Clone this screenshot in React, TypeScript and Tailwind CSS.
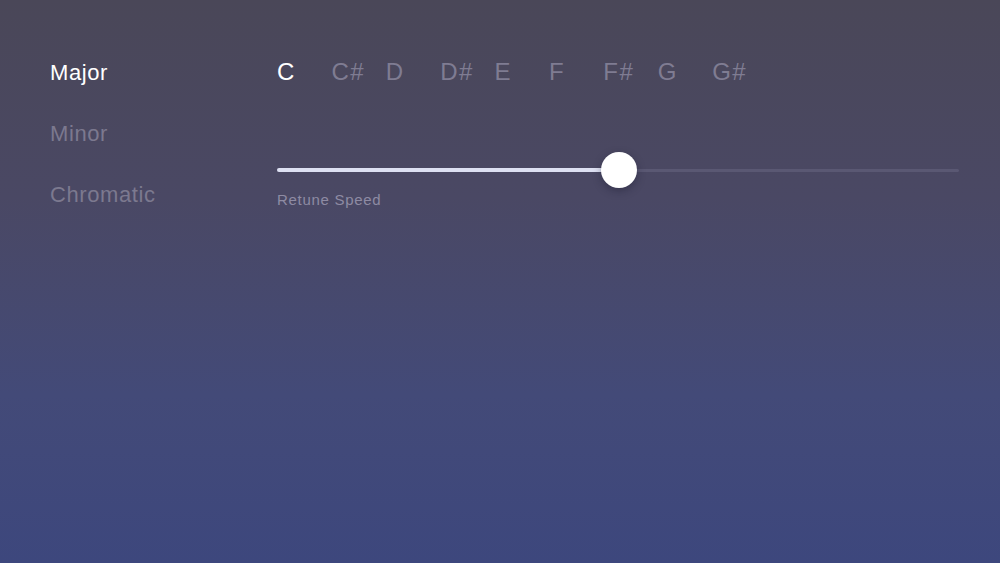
const scales = ["Major", "Minor", "Chromatic"];
const notes = ["C", "C#", "D", "D#", "E", "F", "F#", "G", "G#"];

function RetuneSlider({ value }: { value: number }) {
  return (
    <div className="w-[682px]">
      <div className="relative flex h-9 items-center">
        <div className="h-[3px] w-full rounded-full bg-[#5a5873]" />
        <div
          className="absolute left-0 h-1 rounded-full bg-[#dde0f2]"
          style={{ width: `${value * 100}%` }}
        />
        <div
          className="absolute h-9 w-9 -translate-x-1/2 rounded-full bg-white shadow-[0_3px_8px_rgba(20,20,40,0.35)]"
          style={{ left: `${value * 100}%` }}
        />
      </div>
      <p className="mt-[1px] text-[15px] tracking-[0.7px] text-[#8e8ba3]">Retune Speed</p>
    </div>
  );
}

export default function App() {
  return (
    <div
      className="flex h-[563px] w-[1000px] bg-[linear-gradient(to_bottom,#4a4758_0%,#4a4864_35%,#434a78_70%,#3d477d_100%)] pt-[57px] font-['Liberation_Sans',Arial,sans-serif]"
    >
      <ul className="flex w-[277px] flex-col gap-[31px] pl-[50px] pt-[1px]">
        {scales.map((s, i) => (
          <li
            key={s}
            className={`text-[22px] leading-[30px] tracking-[0.6px] ${i === 0 ? "text-white" : "text-[#7c798f]"}`}
          >
            {s}
          </li>
        ))}
      </ul>
      <div className="flex flex-col">
        <div className="flex">
          {notes.map((n, i) => (
            <span
              key={n}
              className={`w-[54.4px] text-[24px] leading-[30px] tracking-[1.5px] ${i === 0 ? "text-white" : "text-[#7f7c92]"}`}
            >
              {n}
            </span>
          ))}
        </div>
        <div className="mt-[65px]">
          <RetuneSlider value={0.502} />
        </div>
      </div>
    </div>
  );
}
